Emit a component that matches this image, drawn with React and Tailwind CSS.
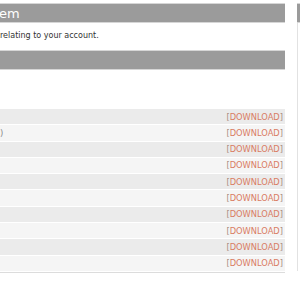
import React from 'react';

const rows = ['', ')', '', '', '', '', '', '', '', ''];

const App = () => {
  return (
    <div className="w-[300px] h-[300px] bg-white overflow-hidden flex" style={{ fontFamily: '"DejaVu Sans", Verdana, sans-serif' }}>
      {/* Main column */}
      <div className="w-[285px] shrink-0 flex flex-col">
        <div className="mt-[3px] h-[20px] bg-[#9b9b9b] border-y border-[#d6d6d6] flex items-center text-white text-[13px] leading-none -ml-[1px]">
          em
        </div>
        <p className="mt-[9px] text-[8px] text-[#333] leading-none whitespace-nowrap">relating to your account.</p>
        <div className="mt-[10px] h-[20px] bg-[#9b9b9b] border-y border-[#d6d6d6]"></div>

        <div className="mt-[39px] border-b border-[#dcdcdc]">
          {rows.map((label, i) => (
            <div
              key={i}
              className={`h-[16.3px] flex items-center justify-between pr-[2px] border-b border-white ${i % 2 === 0 ? 'bg-[#ebebeb]' : 'bg-[#f5f5f5]'}`}
            >
              <span className="text-[8.5px] text-[#888] leading-none">{label}</span>
              <span className="text-[8.3px] leading-none">
                <span className="text-[#a88a80]">[</span>
                <span className="text-[#d97b63]">DOWNLOAD</span>
                <span className="text-[#a88a80]">]</span>
              </span>
            </div>
          ))}
        </div>
      </div>

      {/* Right panel edge */}
      <div className="ml-[12px] flex-1 flex flex-col">
        <div className="mt-[3px] h-[20px] bg-[#9b9b9b] border-y border-[#d6d6d6]"></div>
        <div className="h-[248px] border-l border-[#e2e2e2]"></div>
      </div>
    </div>
  );
};

export default App;
